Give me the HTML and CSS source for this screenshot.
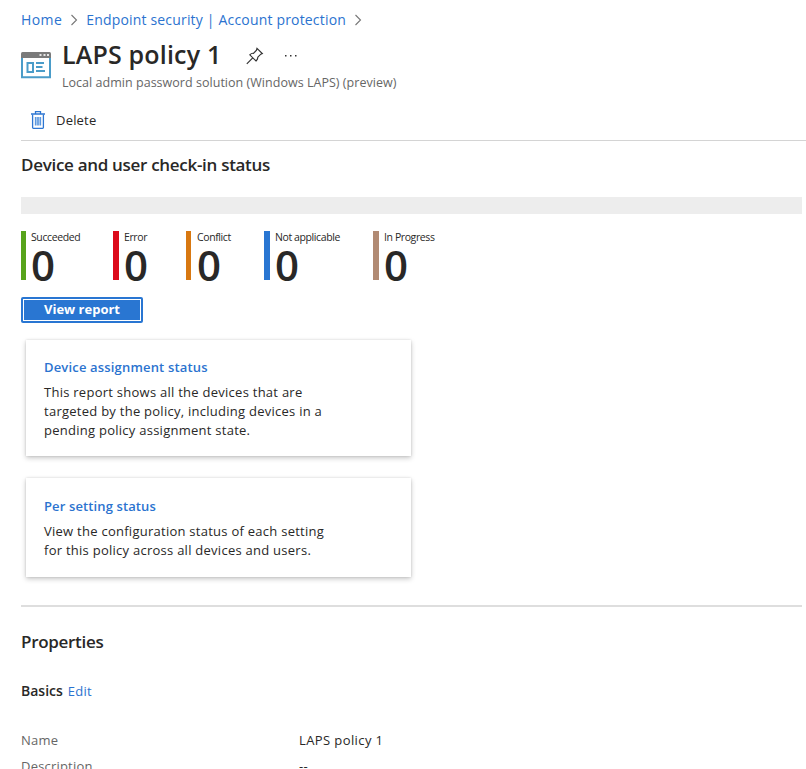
FILE: index.html
```html
<!DOCTYPE html>
<html lang="en">
<head>
<meta charset="utf-8">
<title>LAPS policy 1</title>
<link rel="stylesheet" href="styles.css">
</head>
<body>
<nav class="breadcrumb">
  <a class="crumb-home">Home</a>
  <svg class="chevron" width="8" height="12" viewBox="0 0 8 12"><path d="M1.5 1 6.5 6l-5 5"/></svg>
  <a class="crumb-section">Endpoint security | Account protection</a>
  <svg class="chevron" width="8" height="12" viewBox="0 0 8 12"><path d="M1.5 1 6.5 6l-5 5"/></svg>
</nav>
<header class="header">
  <svg class="policy-icon" width="30" height="27" viewBox="0 0 30 27">
    <path d="M1 5v20.200h28V5" fill="#fff" stroke="#4a9cc9" stroke-width="2"/>
    <path d="M0 6V1.500Q0 0 1.500 0h27Q30 0 30 1.500V6z" fill="#7a7a7a"/>
    <path d="M18.500 2h2v2h-2zM22.500 2h2v2h-2zM26 2h2v2h-2z" fill="#e6e6e6"/>
    <path d="M6.500 11h5.500v9H6.500z" fill="none" stroke="#4a9cc9" stroke-width="2"/>
    <path d="M15 11h8M15 15h6.500M15 19h9" stroke="#4a9cc9" stroke-width="1.800"/>
  </svg>
  <div class="heading">
    <div class="title-row">
      <h1 class="title">LAPS policy 1</h1>
      <svg class="pin" width="18" height="18" viewBox="0 0 18 18"><path d="M11 1.300 16.300 6.600 14.800 7.200 11.800 10.200Q12 12 10 14L3.800 7.800Q5.500 6 7.500 6.300L10.500 3.200zM6.500 11.200.8 16.900"/></svg>
      <svg class="more" width="14" height="4" viewBox="0 0 14 4"><path d="M1 1h1.500v1.500H1zM6 1h1.500v1.500H6zM11 1h1.500v1.500H11z"/></svg>
    </div>
    <p class="subtitle">Local admin password solution (Windows LAPS) (preview)</p>
  </div>
</header>
<div class="toolbar">
  <svg class="trash" width="14" height="18" viewBox="0 0 14 18">
    <path d="M1.600 3.500v13q0 .8.800.8h9.200q.8 0 .8-.8v-13" fill="#fff" stroke="#2d76d2" stroke-width="1.300"/>
    <path d="M0 3h14M4.500 2.500V.7h5v1.800" fill="none" stroke="#2d76d2" stroke-width="1.300"/>
    <path d="M4.700 6v8.500M7 6v8.500M9.300 6v8.500" stroke="#5c98df" stroke-width="1.700"/>
  </svg>
  <span class="delete-label">Delete</span>
</div>
<main class="content">
  <h2 class="section-title checkin-title">Device and user check-in status</h2>
  <div class="status-bar"></div>
  <div class="stats">
    <div class="stat succeeded"><span class="stat-label">Succeeded</span><span class="stat-value">0</span></div>
    <div class="stat error"><span class="stat-label">Error</span><span class="stat-value">0</span></div>
    <div class="stat conflict"><span class="stat-label">Conflict</span><span class="stat-value">0</span></div>
    <div class="stat not-applicable"><span class="stat-label">Not applicable</span><span class="stat-value">0</span></div>
    <div class="stat in-progress"><span class="stat-label">In Progress</span><span class="stat-value">0</span></div>
  </div>
  <button class="report-button"><span>View report</span></button>
  <section class="card card-device">
    <h3 class="card-title device-title">Device assignment status</h3>
    <p class="card-text">This report shows all the devices that are<br>targeted by the policy, including devices in a<br>pending policy assignment state.</p>
  </section>
  <section class="card card-setting">
    <h3 class="card-title">Per setting status</h3>
    <p class="card-text">View the configuration status of each setting<br>for this policy across all devices and users.</p>
  </section>
  <hr class="divider">
  <h2 class="section-title properties-title">Properties</h2>
  <div class="basics"><h3 class="basics-title">Basics</h3><a class="edit">Edit</a></div>
  <dl class="properties">
    <dt>Name</dt><dd>LAPS policy 1</dd>
    <dt>Description</dt><dd>--</dd>
  </dl>
</main>
</body>
</html>
```
FILE: styles.css
```css
* { box-sizing: border-box; }
html { overflow: hidden; }
body {
  margin: 0;
  height: 769px;
  overflow: hidden;
  background: #fff;
  color: #292827;
  font-family: "Open Sans", "Noto Sans", sans-serif;
  font-size: 13px;
}
h1, h2, h3, p, dl, dd { margin: 0; }
a { color: #2b73cf; }
.breadcrumb {
  display: flex;
  align-items: center;
  height: 39px;
  padding-left: 21px;
  font-size: 14px;
  letter-spacing: .18px;
}
.crumb-home { letter-spacing: .4px; }
.breadcrumb .chevron { margin: 0 8px; }
.chevron { fill: none; stroke: #777; stroke-width: 1.1; }
.header { display: flex; height: 61px; padding-left: 21px; }
.policy-icon { margin-top: 13px; }
.heading { margin-left: 11px; }
.title-row { display: flex; align-items: center; height: 34px; }
.title { font-size: 25px; font-weight: 600; line-height: 32px; letter-spacing: .18px; margin-top: -4px; white-space: nowrap; }
.pin { margin-left: 25px; fill: none; stroke: #333; stroke-width: 1.2; }
.more { margin-left: 20px; fill: #333; }
.subtitle { font-size: 12.5px; line-height: 20px; letter-spacing: .03px; color: #666; white-space: nowrap; }
.toolbar {
  display: flex;
  align-items: center;
  height: 41px;
  margin-left: 21px;
  padding-left: 10px;
  border-bottom: 1px solid #d4d4d4;
}
.delete-label { margin-left: 11px; letter-spacing: .2px; }
.content { padding: 0 4px 0 21px; }
.section-title { font-size: 17px; font-weight: 600; line-height: 24px; letter-spacing: -.3px; white-space: nowrap; }
.checkin-title { padding-top: 12px; }
.status-bar { height: 17px; margin-top: 20px; background: #ededed; }
.stats { display: flex; height: 49px; margin-top: 17px; }
.stat {
  display: flex;
  flex-direction: column;
  border-left: 6px solid;
  padding-left: 5px;
  white-space: nowrap;
}
.stat-label { height: 12px; font-size: 10.5px; line-height: 12px; letter-spacing: -.4px; }
.stat-value { height: 37px; font-size: 42px; font-weight: 600; line-height: 43px; }
.succeeded { width: 92px; border-color: #57a31b; border-left-width: 5px; }
.error { width: 73px; border-color: #dc0b1b; }
.conflict { width: 78px; border-color: #d87811; border-left-width: 5px; padding-left: 6px; }
.not-applicable { width: 109px; border-color: #2976d2; }
.in-progress { border-color: #b18a73; }
.report-button {
  display: block;
  width: 122px;
  height: 26px;
  margin-top: 17px;
  padding: 2px;
  border: 0;
  border-radius: 2px;
  background: #2976d2;
  color: #fff;
  font: 700 13px/18px "Open Sans", sans-serif;
}
.report-button span { display: block; height: 22px; border: 1px solid #fff; }
.card {
  width: 385px;
  margin-left: 5px;
  padding-left: 18px;
  background: #fff;
  box-shadow: 0 2px 5px rgba(0, 0, 0, .22), 0 0 2px rgba(0, 0, 0, .12);
  white-space: nowrap;
}
.card-device { height: 116px; margin-top: 17px; padding-top: 17px; }
.card-setting { height: 99px; margin-top: 22px; padding-top: 18px; }
.card-title { font-size: 13px; font-weight: 600; line-height: 20px; letter-spacing: .12px; color: #2b73cf; }
.device-title { letter-spacing: .17px; }
.card-text { margin-top: 6px; line-height: 19px; letter-spacing: .26px; }
.divider { height: 2px; margin: 28px 0 0; border: 0; background: #dedede; }
.properties-title { margin-top: 23px; }
.basics { display: flex; align-items: center; height: 20px; margin-top: 26px; }
.basics-title { font-size: 14px; font-weight: 600; }
.edit { margin-left: 5px; padding-top: 1px; letter-spacing: .2px; }
.properties { display: grid; grid-template-columns: 278px 1fr; margin-top: 27px; line-height: 26px; letter-spacing: .4px; }
.properties dt { color: #666; letter-spacing: .2px; }
```
